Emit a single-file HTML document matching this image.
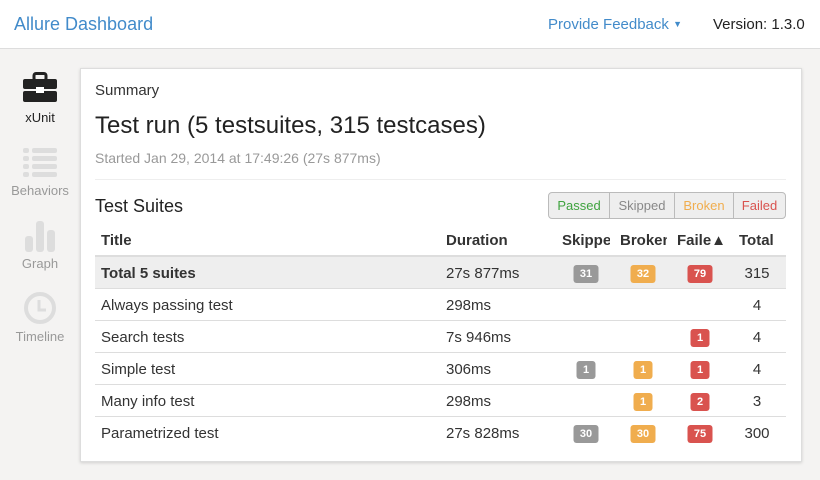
<!DOCTYPE html>
<html><head><style>
*{margin:0;padding:0;box-sizing:border-box}
body{width:820px;height:480px;background:#f4f3f2;font-family:"Liberation Sans",sans-serif;color:#333;position:relative;overflow:hidden}
.hdr{position:absolute;left:0;top:0;width:820px;height:49px;background:#fff;border-bottom:1px solid #ddd}
.a{position:absolute;white-space:nowrap}
.panel{position:absolute;left:80px;top:68px;width:722px;height:394px;background:#fff;border:1px solid #ddd;box-shadow:0 1px 3px rgba(0,0,0,.15)}
.row{position:absolute;left:95px;width:691px;height:32px;border-top:1px solid #ddd;font-size:15px}
.row span{position:absolute;top:8px}
.b{position:absolute;top:8px;height:18px;line-height:18px;border-radius:3px;color:#fff;font-size:11px;font-weight:bold;text-align:center;transform:translateX(-50%)}
.s{background:#999}.o{background:#f0ad4e}.r{background:#d9534f}
.th{position:absolute;top:232px;font-size:15px;font-weight:bold}
.nav{position:absolute;width:80px;text-align:center;font-size:13px;color:#999}
</style></head><body>
<div class="hdr">
<div class="a" style="left:14px;top:14px;font-size:18px;color:#428bca">Allure Dashboard</div>
<div class="a" style="left:548px;top:16px;font-size:15px;color:#428bca">Provide Feedback <span style="font-size:9px;position:relative;top:-2px">▼</span></div>
<div class="a" style="left:713px;top:16px;font-size:15px;color:#222">Version: 1.3.0</div>
</div>
<svg class="a" style="left:23px;top:72px" width="34" height="30" viewBox="0 0 34 30"><rect x="11" y="1.5" width="12" height="7" rx="2" fill="none" stroke="#222" stroke-width="3"/><rect x="0" y="7" width="34" height="10" rx="2" fill="#222"/><rect x="0" y="19" width="34" height="11" rx="2" fill="#222"/><rect x="13" y="15" width="8" height="6" fill="#fff"/></svg>
<div class="nav" style="left:0;top:110px;color:#222">xUnit</div>
<svg class="a" style="left:23px;top:147px" width="34" height="32"><g fill="#ddd"><rect x="0" y="1" width="6" height="5" rx="2"/><rect x="9" y="1" width="25" height="5" rx="2"/><rect x="0" y="9" width="6" height="5" rx="2"/><rect x="9" y="9" width="25" height="5" rx="2"/><rect x="0" y="17" width="6" height="5" rx="2"/><rect x="9" y="17" width="25" height="5" rx="2"/><rect x="0" y="25" width="6" height="5" rx="2"/><rect x="9" y="25" width="25" height="5" rx="2"/></g></svg>
<div class="nav" style="left:0;top:183px">Behaviors</div>
<svg class="a" style="left:25px;top:220px" width="32" height="32"><g fill="#ddd"><rect x="0" y="16" width="8" height="16" rx="3"/><rect x="11" y="1" width="8" height="31" rx="3"/><rect x="22" y="10" width="8" height="22" rx="3"/></g></svg>
<div class="nav" style="left:0;top:256px">Graph</div>
<svg class="a" style="left:23px;top:291px" width="34" height="34"><circle cx="17" cy="17" r="14" fill="none" stroke="#ddd" stroke-width="4"/><path d="M16 9v10h7" fill="none" stroke="#ddd" stroke-width="3"/></svg>
<div class="nav" style="left:0;top:329px">Timeline</div>

<div class="panel"></div>
<div class="a" style="left:95px;top:82px;font-size:15px">Summary</div>
<div class="a" style="left:95px;top:112px;font-size:24px;color:#222">Test run (5 testsuites, 315 testcases)</div>
<div class="a" style="left:95px;top:150px;font-size:14px;color:#999">Started Jan 29, 2014 at 17:49:26 (27s 877ms)</div>
<div class="a" style="left:95px;top:179px;width:691px;border-top:1px solid #eee"></div>
<div class="a" style="left:95px;top:196px;font-size:18px;color:#222">Test Suites</div>
<div class="a" style="left:548px;top:192px;width:238px;height:27px;border:1px solid #bbb;border-radius:4px;background:#eee;font-size:13px;display:flex;overflow:hidden">
<div style="width:61px;text-align:center;line-height:25px;color:#3fa33f;border-right:1px solid #bbb">Passed</div>
<div style="width:65px;text-align:center;line-height:25px;color:#888;border-right:1px solid #bbb">Skipped</div>
<div style="width:59px;text-align:center;line-height:25px;color:#f0ad4e;border-right:1px solid #bbb">Broken</div>
<div style="flex:1;text-align:center;line-height:25px;color:#d9534f">Failed</div>
</div>
<div class="th" style="left:101px">Title</div>
<div class="th" style="left:446px">Duration</div>
<div class="th" style="left:562px;width:48px;overflow:hidden">Skipped</div>
<div class="th" style="left:620px;width:47px;overflow:hidden">Broken</div>
<div class="th" style="left:677px">Faile▲</div>
<div class="th" style="left:739px">Total</div>

<div class="row" style="top:255px;background:#eee;border-top:2px solid #ddd;height:33px"><span style="left:6px;font-weight:bold">Total 5 suites</span><span style="left:351px">27s 877ms</span>
<div class="b s" style="left:491px;width:25px">31</div><div class="b o" style="left:548px;width:25px">32</div><div class="b r" style="left:605px;width:25px">79</div><span style="left:662px;transform:translateX(-50%)">315</span></div>
<div class="row" style="top:288px"><span style="left:6px">Always passing test</span><span style="left:351px">298ms</span><span style="left:662px;transform:translateX(-50%)">4</span></div>
<div class="row" style="top:320px"><span style="left:6px">Search tests</span><span style="left:351px">7s 946ms</span><div class="b r" style="left:605px;width:19px">1</div><span style="left:662px;transform:translateX(-50%)">4</span></div>
<div class="row" style="top:352px"><span style="left:6px">Simple test</span><span style="left:351px">306ms</span><div class="b s" style="left:491px;width:19px">1</div><div class="b o" style="left:548px;width:19px">1</div><div class="b r" style="left:605px;width:19px">1</div><span style="left:662px;transform:translateX(-50%)">4</span></div>
<div class="row" style="top:384px"><span style="left:6px">Many info test</span><span style="left:351px">298ms</span><div class="b o" style="left:548px;width:19px">1</div><div class="b r" style="left:605px;width:19px">2</div><span style="left:662px;transform:translateX(-50%)">3</span></div>
<div class="row" style="top:416px"><span style="left:6px">Parametrized test</span><span style="left:351px">27s 828ms</span><div class="b s" style="left:491px;width:25px">30</div><div class="b o" style="left:548px;width:25px">30</div><div class="b r" style="left:605px;width:25px">75</div><span style="left:662px;transform:translateX(-50%)">300</span></div>
</body></html>
